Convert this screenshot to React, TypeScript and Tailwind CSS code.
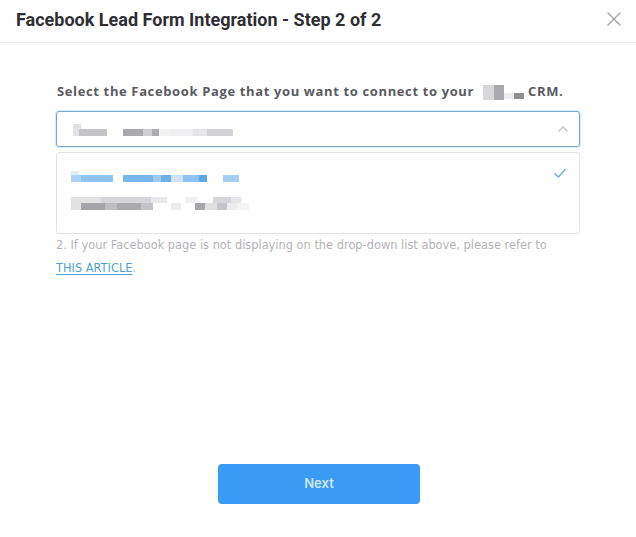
import React from "react";

// Pixelated placeholder cells used for masked page names
type Cell = { w: number; c: string; h?: number; dy?: number };

function Masked({ cells, gap = 0 }: { cells: Cell[]; gap?: number }) {
  return (
    <div className="flex items-center blur-[0.6px]" style={{ gap }}>
      {cells.map((cell, i) => (
        <div
          key={i}
          style={{
            width: cell.w,
            height: cell.h ?? 7,
            background: cell.c,
            transform: cell.dy ? `translateY(${cell.dy}px)` : undefined,
          }}
        />
      ))}
    </div>
  );
}

export default function App() {
  return (
    <div
      className="w-[636px] h-[537px] bg-white flex flex-col overflow-hidden"
      style={{ fontFamily: "'Open Sans', 'Liberation Sans', sans-serif" }}
    >
      {/* Header */}
      <div className="h-[43px] flex items-center justify-between pl-[16px] pr-[14px] border-b border-[#ececec]">
        <h1
          className="text-[18px] font-bold text-[#2e2e33] -mt-[4px]"
          style={{ fontFamily: "Roboto, 'Liberation Sans', sans-serif" }}
        >
          Facebook Lead Form Integration - Step 2 of 2
        </h1>
        <svg width="16" height="16" viewBox="0 0 16 16" className="-mt-[5px]">
          <path d="M2 2 L14 14 M14 2 L2 14" stroke="#a9a9ad" strokeWidth="1.5" strokeLinecap="round" />
        </svg>
      </div>

      {/* Body */}
      <div className="flex flex-col px-[56px] pt-[38px]">
        <div className="flex items-center text-[13px] font-bold tracking-[0.63px] text-[#5a5a60] pl-[1px] h-[22px]">
          <span>Select the Facebook Page that you want to connect to your</span>
          <span className="ml-[9px] mr-[4px]">
            <Masked
              cells={[
                { w: 11, c: "#d7d7da", h: 15 },
                { w: 10, c: "#a9a9ae", h: 15 },
                { w: 10, c: "#ececee", h: 6, dy: 4 },
                { w: 10, c: "#8f8f95", h: 6, dy: 4 },
              ]}
            />
          </span>
          <span>CRM.</span>
        </div>

        {/* Select */}
        <div className="mt-[8px] h-[36px] border border-[#74a9cc] rounded-[3px] shadow-[0_0_0_1px_rgba(150,200,230,0.35)] flex items-center justify-between pl-[16px] pr-[10px]">
          <div className="flex flex-col mt-[2px]">
            <Masked cells={[{ w: 8, c: "#e3e3e6", h: 5 }]} />
            <Masked
              cells={[
                { w: 6, c: "#e4e4e6" },
                { w: 28, c: "#c4c4c8" },
                { w: 16, c: "#ffffff" },
                { w: 20, c: "#a9a9ae" },
                { w: 9, c: "#d0d0d4" },
                { w: 7, c: "#ababb0" },
                { w: 12, c: "#f3f3f4" },
                { w: 22, c: "#f0f0f2" },
                { w: 14, c: "#e6e6e8" },
                { w: 26, c: "#d4d4d8" },
              ]}
            />
          </div>
          <svg width="12" height="8" viewBox="0 0 12 8">
            <path d="M1.5 6.5 L6 2 L10.5 6.5" fill="none" stroke="#c5c5c9" strokeWidth="1.3" />
          </svg>
        </div>

        {/* Dropdown list */}
        <div className="mt-[5px] h-[82px] border border-[#e2e2e5] rounded-[3px] flex flex-col pl-[14px] pr-[14px] pt-[15px]">
          <div className="flex items-center justify-between h-[16px]">
            <div className="flex flex-col">
              <Masked cells={[{ w: 8, c: "#e0eefa", h: 4 }]} />
              <Masked
                cells={[
                  { w: 10, c: "#a9d2f4" },
                  { w: 32, c: "#8fc4f0" },
                  { w: 10, c: "#ffffff" },
                  { w: 30, c: "#79b6ec" },
                  { w: 8, c: "#9ccbf2" },
                  { w: 10, c: "#6cafea" },
                  { w: 12, c: "#cde4f8" },
                  { w: 16, c: "#8fc4f0" },
                  { w: 8, c: "#5ea6e8" },
                  { w: 16, c: "#ffffff" },
                  { w: 16, c: "#a3cff3" },
                ]}
              />
            </div>
            <svg width="14" height="12" viewBox="0 0 14 12" className="-mt-[6px] mr-[-2px]">
              <path d="M1.5 6.5 L5.5 10 L12.5 2" fill="none" stroke="#6faee0" strokeWidth="1.4" />
            </svg>
          </div>
          <div className="flex flex-col mt-[13px]">
            <Masked
              cells={[
                { w: 30, c: "#e2e2e5", h: 6 },
                { w: 50, c: "#d6d6da", h: 6 },
                { w: 16, c: "#e8e8ea", h: 6 },
                { w: 18, c: "#ffffff", h: 6 },
                { w: 12, c: "#f1f1f2", h: 6 },
                { w: 16, c: "#ffffff", h: 6 },
                { w: 18, c: "#d6d6da", h: 6 },
                { w: 10, c: "#e6e6e8", h: 6 },
              ]}
            />
            <Masked
              cells={[
                { w: 10, c: "#e2e2e5" },
                { w: 24, c: "#a4a4aa" },
                { w: 12, c: "#bdbdc2" },
                { w: 24, c: "#a9a9ae" },
                { w: 12, c: "#c4c4c8" },
                { w: 18, c: "#ffffff" },
                { w: 10, c: "#ececee" },
                { w: 14, c: "#ffffff" },
                { w: 10, c: "#a6a6ab" },
                { w: 12, c: "#e0e0e3" },
                { w: 10, c: "#c6c6ca" },
                { w: 10, c: "#ececee" },
                { w: 12, c: "#f4f4f5" },
              ]}
            />
          </div>
        </div>

        {/* Help note */}
        <p
          className="mt-[3px] text-[11.4px] leading-[16px] text-[#b4b4b8]"
          style={{ fontFamily: "'DejaVu Sans', 'Open Sans', sans-serif" }}
        >
          2. If your Facebook page is not displaying on the drop-down list above, please refer to
        </p>
        <p
          className="mt-[7px] text-[11.4px] leading-[16px] text-[#b4b4b8]"
          style={{ fontFamily: "'DejaVu Sans', 'Open Sans', sans-serif" }}
        >
          <a href="#" className="text-[#4f9fd6] underline underline-offset-[2px]">THIS ARTICLE</a>.
        </p>
      </div>

      {/* Footer */}
      <div className="flex-1 flex items-end justify-center pb-[33px] pl-[2px]">
        <button
          className="w-[202px] h-[40px] rounded-[4px] bg-[#3b9af3] text-[#cfe7ff] text-[13px] font-semibold"
          style={{ fontFamily: "Inter, 'Open Sans', sans-serif" }}
        >
          Next
        </button>
      </div>
    </div>
  );
}
